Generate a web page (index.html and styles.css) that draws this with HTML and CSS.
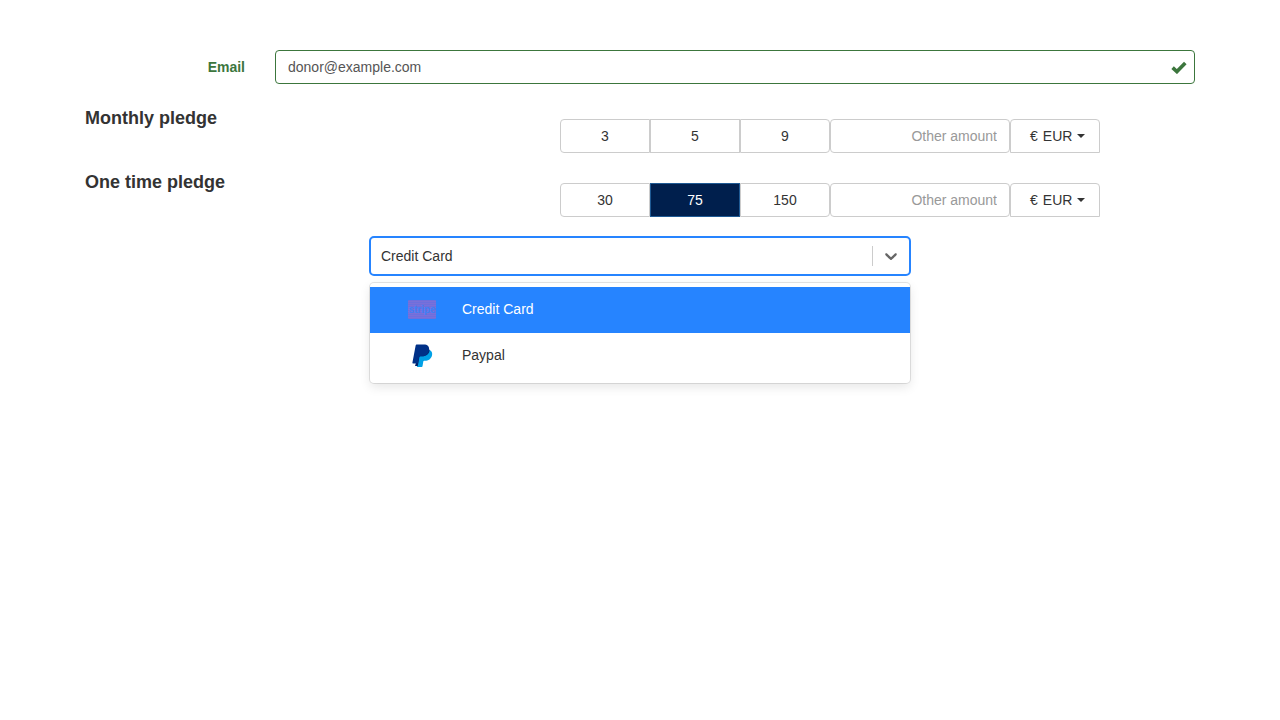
FILE: index.html
```html
<!DOCTYPE html>
<html lang="en">
<head>
<meta charset="utf-8">
<title>Pledge</title>
<link rel="stylesheet" href="styles.css">
</head>
<body>
<main class="page">
  <div class="email-row">
    <label class="email-label" for="email">Email</label>
    <div class="email-field">
      <input id="email" class="email-input" type="text" value="donor@example.com">
      <svg class="check" width="16" height="14" viewBox="0 0 16 14"><path d="M1.6 7.600 L5.900 11.600 L14.300 3" fill="none" stroke="#3c763d" stroke-width="3.600"/></svg>
    </div>
  </div>

  <section class="pledge">
    <h2 class="pledge-title">Monthly pledge</h2>
    <div class="amounts">
      <button class="amount first">3</button>
      <button class="amount">5</button>
      <button class="amount last">9</button>
      <input class="other" type="text" placeholder="Other amount">
      <button class="currency"><span class="euro">€</span>EUR<span class="caret"></span></button>
    </div>
  </section>

  <section class="pledge">
    <h2 class="pledge-title">One time pledge</h2>
    <div class="amounts">
      <button class="amount first">30</button>
      <button class="amount active">75</button>
      <button class="amount last">150</button>
      <input class="other" type="text" placeholder="Other amount">
      <button class="currency"><span class="euro">€</span>EUR<span class="caret"></span></button>
    </div>
  </section>

  <div class="picker">
    <div class="control">
      <span class="control-value">Credit Card</span>
      <span class="control-sep"></span>
      <svg class="chevron" width="20" height="20" viewBox="0 0 20 20"><path fill="#666" d="M4.516 7.548c.436-.446 1.043-.481 1.576 0L10 11.295l3.908-3.747c.533-.481 1.141-.446 1.574 0 .436.445.408 1.197 0 1.615-.406.418-4.695 4.502-4.695 4.502a1.095 1.095 0 0 1-1.576 0S4.924 9.581 4.516 9.163c-.409-.418-.436-1.170 0-1.615z"/></svg>
    </div>
    <ul class="menu">
      <li class="option selected">
        <span class="option-icon"><span class="stripe">stripe</span></span>
        <span class="option-text">Credit Card</span>
      </li>
      <li class="option">
        <span class="option-icon">
          <svg class="paypal" width="21" height="24" viewBox="0 0 21 24">
            <path fill="#00a0e6" d="M17.800 6c1.900 1 2.700 2.700 2.300 5-.8 4-3.700 5.800-7.300 5.800h-.6c-.5 0-.8.300-.9.800l-.8 4.700c-.1.400-.4.700-.8.700H5.400c-.4 0-.6-.3-.5-.7L7 10z"/>
            <path fill="#012169" d="M17.600 5.400c.1 3.900-3.100 6.900-7.500 6.900H8.300c-.5 0-.8.300-.9.800l-1.600 8.900H3L7 9z"/>
            <path fill="#003087" d="M5 .5h6.700c3.800 0 6 2 5.300 5.800-.8 4.200-3.700 6-7.300 6H8c-.5 0-.8.300-.9.800l-1 5.900c-.1.300-.3.500-.6.500H1c-.4 0-.7-.3-.6-.7L3.600 1.700C3.700 1 4.300.5 5 .5z"/>
          </svg>
        </span>
        <span class="option-text">Paypal</span>
      </li>
    </ul>
  </div>
</main>
</body>
</html>
```

FILE: styles.css
```css
* { box-sizing: border-box; }
html, body { margin: 0; background: #fff; }
body {
  font-family: "Liberation Sans", Arial, sans-serif;
  font-size: 14px;
  line-height: 20px;
  color: #333;
}
.page { min-height: 720px; padding: 50px 85px 0; }

.email-row { display: flex; align-items: center; gap: 30px; }
.email-label { flex: 0 0 160px; text-align: right; font-weight: 700; color: #3c763d; }
.email-field { flex: 1; position: relative; }
.email-input {
  display: block; width: 100%; height: 34px; padding: 6px 12px;
  border: 1px solid #3c763d; border-radius: 4px;
  font: inherit; color: #555; background: #fff; outline: 0;
}
.check { position: absolute; right: 8px; top: 10px; }

.pledge { display: flex; align-items: flex-end; height: 45px; margin-top: 24px; }
.pledge + .pledge { margin-top: 19px; }
.pledge-title {
  flex: 0 0 475px; align-self: flex-start; margin: 0;
  font-size: 18px; line-height: 20px; font-weight: 700; color: #333;
}
.amounts { display: flex; }
.amount, .currency, .other {
  height: 34px; font: inherit; color: #333; background: #fff;
  border: 1px solid #ccc; margin: 0; outline: 0;
}
.amount { width: 90px; padding: 0; border-radius: 0; }
.amount.first { border-radius: 4px 0 0 4px; }
.amount.last { border-radius: 0 4px 4px 0; }
.amount.active { background: #001f4d; color: #fff; border-color: #1f5a94; }
.other { width: 180px; padding: 6px 12px; text-align: right; border-radius: 4px; }
.other::placeholder { color: #999; opacity: 1; }
.currency {
  display: flex; align-items: center; width: 90px; padding: 0 0 0 19px;
  border-radius: 4px 4px 0 0;
}
.euro { margin-right: 5px; }
.caret {
  width: 0; height: 0; margin-left: 5px;
  border-top: 4px solid #333; border-left: 4px solid transparent; border-right: 4px solid transparent;
}

.picker { width: 540px; margin: 19px auto 0; }
.control {
  display: flex; align-items: center; height: 40px; margin: 0 -1px; padding-left: 10px;
  border: 2px solid #2684ff; border-radius: 5px; background: #fff; color: #333;
}
.control-value { flex: 1; }
.control-sep { width: 1px; height: 20px; background: #ccc; }
.chevron { margin: 0 8px; }
.menu {
  list-style: none; margin: 7px 0 0; padding: 4px 0; border-radius: 4px; background: #fff;
  box-shadow: 0 0 0 1px rgba(0,0,0,.1), 0 4px 11px rgba(0,0,0,.1);
}
.option { display: flex; align-items: center; height: 46px; color: #333; }
.option.selected { background: #2684ff; color: #fff; }
.option-icon { flex: 0 0 92px; display: flex; justify-content: center; padding-left: 12px; }
.option-text { margin-bottom: 2px; }
.stripe {
  width: 28px; height: 19px; margin-bottom: 2px; border-radius: 1px;
  background: repeating-linear-gradient(0deg, #6d6fdd 0 1px, #7a70d8 1px 2px);
  color: #3f80f5;
  font-size: 10px; font-weight: 700; line-height: 19px; text-align: center; overflow: hidden;
}
```
